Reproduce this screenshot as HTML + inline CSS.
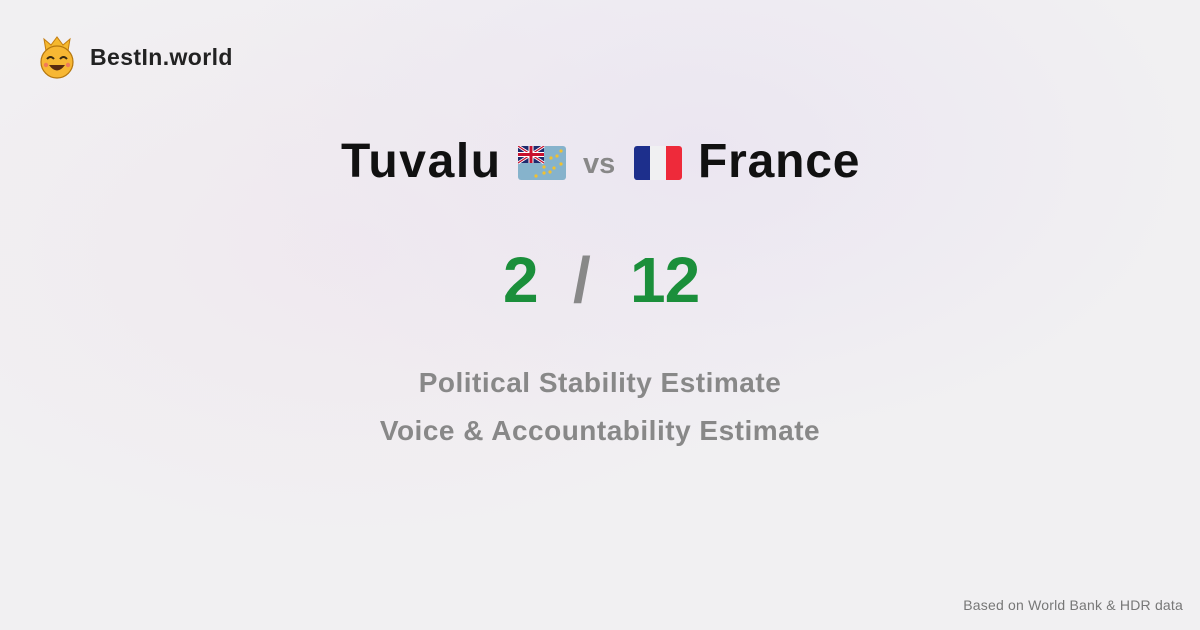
<!DOCTYPE html>
<html><head><meta charset="utf-8"><style>
body{margin:0;width:1200px;height:630px;overflow:hidden;font-family:"Liberation Sans",sans-serif;
background:radial-gradient(ellipse 500px 300px at 700px 150px,#ebe6f1,transparent),radial-gradient(ellipse 500px 300px at 350px 250px,#f0e9ef,transparent),#f1f0f2;position:relative}
.abs{position:absolute}
</style></head><body>
<svg class="abs" style="left:38px;top:35px" width="38" height="44" viewBox="0 0 38 44">
<path d="M8 16 L6 4 L13 10 L19 2 L25 10 L32 4 L30 16 Z" fill="#f5b82e" stroke="#c47d10" stroke-width="1"/>
<circle cx="19" cy="27" r="16" fill="#f7b733" stroke="#b5770e" stroke-width="1.2"/>
<path d="M9 24 q3.5 -4 7 0 M22 24 q3.5 -4 7 0" stroke="#3a2a10" stroke-width="2" fill="none"/>
<path d="M11 30 q8 11 16 0 Z" fill="#5a2a10"/>
<circle cx="8" cy="30" r="2.2" fill="#f07a5a"/><circle cx="30" cy="30" r="2.2" fill="#f07a5a"/>
</svg>
<div class="abs" style="left:90px;top:44px;font-size:23px;font-weight:bold;color:#222;letter-spacing:0.4px">BestIn.world</div>
<div class="abs" style="left:341px;top:134px;font-size:48px;font-weight:bold;color:#111;letter-spacing:1.6px">Tuvalu</div>
<svg class="abs" style="left:518px;top:146px" width="48" height="34" viewBox="0 0 48 34">
<rect width="48" height="34" rx="3" fill="#86b3cc"/>
<rect x="0" y="0" width="26" height="17" fill="#1f2a6e"/>
<path d="M0 0 L26 17 M26 0 L0 17" stroke="#fff" stroke-width="3"/>
<path d="M0 0 L26 17 M26 0 L0 17" stroke="#c8102e" stroke-width="1.2"/>
<path d="M13 0 V17 M0 8.5 H26" stroke="#fff" stroke-width="5"/>
<path d="M13 0 V17 M0 8.5 H26" stroke="#c8102e" stroke-width="3"/>
<g fill="#f2c12e"><circle cx="43" cy="5" r="1.6"/><circle cx="33" cy="12" r="1.6"/><circle cx="39" cy="10" r="1.6"/><circle cx="43" cy="18" r="1.6"/><circle cx="36" cy="22" r="1.6"/><circle cx="26" cy="21" r="1.6"/><circle cx="32" cy="26" r="1.6"/><circle cx="26" cy="27" r="1.6"/><circle cx="18" cy="30" r="1.6"/></g>
</svg>
<div class="abs" style="left:583px;top:148px;font-size:29px;font-weight:bold;color:#888">vs</div>
<svg class="abs" style="left:634px;top:146px" width="48" height="34" viewBox="0 0 48 34">
<clipPath id="c"><rect width="48" height="34" rx="3"/></clipPath>
<g clip-path="url(#c)"><rect width="16" height="34" fill="#1d2f8c"/><rect x="16" width="16" height="34" fill="#f0f0f2"/><rect x="32" width="16" height="34" fill="#ee2a3a"/></g>
</svg>
<div class="abs" style="left:698px;top:134px;font-size:48px;font-weight:bold;color:#111;letter-spacing:0.8px">France</div>
<div class="abs" style="left:503px;top:243px;font-size:64px;font-weight:bold;color:#1b8f3b">2</div>
<div class="abs" style="left:573px;top:243px;font-size:64px;font-weight:bold;color:#888">/</div>
<div class="abs" style="left:630px;top:243px;font-size:64px;font-weight:bold;color:#1b8f3b;letter-spacing:-1px">12</div>
<div class="abs" style="left:0;width:1200px;top:359px;text-align:center;font-size:28px;font-weight:bold;color:#888;line-height:48px;letter-spacing:0.5px">Political Stability Estimate<br>Voice &amp; Accountability Estimate</div>
<div class="abs" style="right:17px;top:597px;font-size:14px;color:#777;letter-spacing:0.2px">Based on World Bank &amp; HDR data</div>
</body></html>
